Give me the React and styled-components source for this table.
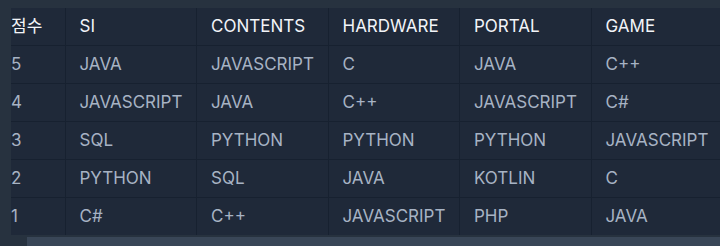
import React from 'react'
import styled, { createGlobalStyle } from 'styled-components'

const GlobalStyle = createGlobalStyle`
  html, body {
    margin: 0;
    padding: 0;
    background: #27323f;
    font-family: Inter, "Noto Sans CJK KR", sans-serif;
  }
`

const Page = styled.div`
  width: 720px;
  height: 246px;
  overflow: hidden;
  display: flex;
  flex-direction: column;
`

const Scroller = styled.div`
  margin: 8px 0 0 11px;
  overflow: hidden;
`

const Table = styled.table`
  border-collapse: collapse;
  table-layout: fixed;
  width: 711.5px;
  background: #1f2939;
  font-size: 17px;
  line-height: 21px;
`

const Cell = styled.td`
  box-sizing: border-box;
  width: ${(props) => (props.first ? '54px' : '131.5px')};
  padding: ${(props) => (props.first ? '8px 0' : '8px 14px')};
  text-align: left;
  white-space: nowrap;
  overflow: hidden;
  color: ${(props) => (props.head ? '#f2f4f8' : '#a7b3c4')};
  font-weight: 400;
  border-right: 1px solid #172130;
  border-bottom: 1px solid #172130;
  &:last-child {
    border-right: none;
  }
`

const Bar = styled.div`
  display: flex;
  margin-top: 2px;
  height: 9px;
`

const Track = styled.div`
  width: 27px;
  background: #27323f;
`

const Thumb = styled.div`
  flex: 1;
  background: #394657;
`

const head = ['점수', 'SI', 'CONTENTS', 'HARDWARE', 'PORTAL', 'GAME']

const rows = [
  ['5', 'JAVA', 'JAVASCRIPT', 'C', 'JAVA', 'C++'],
  ['4', 'JAVASCRIPT', 'JAVA', 'C++', 'JAVASCRIPT', 'C#'],
  ['3', 'SQL', 'PYTHON', 'PYTHON', 'PYTHON', 'JAVASCRIPT'],
  ['2', 'PYTHON', 'SQL', 'JAVA', 'KOTLIN', 'C'],
  ['1', 'C#', 'C++', 'JAVASCRIPT', 'PHP', 'JAVA'],
]

export default function App() {
  return (
    <Page>
      <GlobalStyle />
      <Scroller>
        <Table>
          <thead>
            <tr>
              {head.map((h, i) => (
                <Cell as="th" key={h} head first={i === 0}>
                  {h}
                </Cell>
              ))}
            </tr>
          </thead>
          <tbody>
            {rows.map((r) => (
              <tr key={r[0]}>
                {r.map((c, i) => (
                  <Cell key={i} first={i === 0}>
                    {c}
                  </Cell>
                ))}
              </tr>
            ))}
          </tbody>
        </Table>
      </Scroller>
      <Bar>
        <Track />
        <Thumb />
      </Bar>
    </Page>
  )
}
